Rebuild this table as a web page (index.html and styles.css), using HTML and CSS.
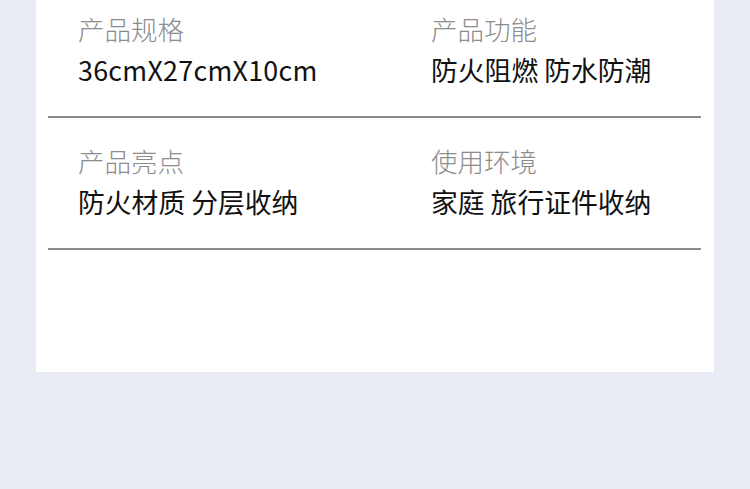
FILE: index.html
```
<!DOCTYPE html>
<html lang="zh-CN">
<head>
    <meta charset="UTF-8">
    <meta name="viewport" content="width=device-width, initial-scale=1.0">
    <title>产品参数</title>
    <link rel="stylesheet" href="styles.css">
</head>
<body>
    <div class="card">
        <div class="row">
            <div class="cell">
                <div class="label">产品规格</div>
                <div class="value latin">36cmX27cmX10cm</div>
            </div>
            <div class="cell">
                <div class="label">产品功能</div>
                <div class="value">防火阻燃 防水防潮</div>
            </div>
        </div>
        <div class="row">
            <div class="cell">
                <div class="label">产品亮点</div>
                <div class="value">防火材质 分层收纳</div>
            </div>
            <div class="cell">
                <div class="label">使用环境</div>
                <div class="value">家庭 旅行证件收纳</div>
            </div>
        </div>
    </div>
</body>
</html>
```

FILE: styles.css
```
body {
    margin: 0;
    background-color: #e9ecf4;
    font-family: "Noto Sans CJK SC", "Noto Sans", sans-serif;
}

.card {
    background-color: #ffffff;
    margin: -14px 36px 0 36px;
    padding: 0 13px 122px 12px;
}

.row {
    display: grid;
    grid-template-columns: 353px 1fr;
    padding: 23px 0 26px 30px;
    border-bottom: 2px solid #8a8a8e;
}

.label {
    font-size: 26.5px;
    line-height: 40px;
    font-weight: 300;
    color: #8c8c8c;
}

.value {
    margin-top: 1px;
    font-size: 26.8px;
    line-height: 40px;
    color: #111111;
}

.value.latin {
    letter-spacing: 0.3px;
}
```
